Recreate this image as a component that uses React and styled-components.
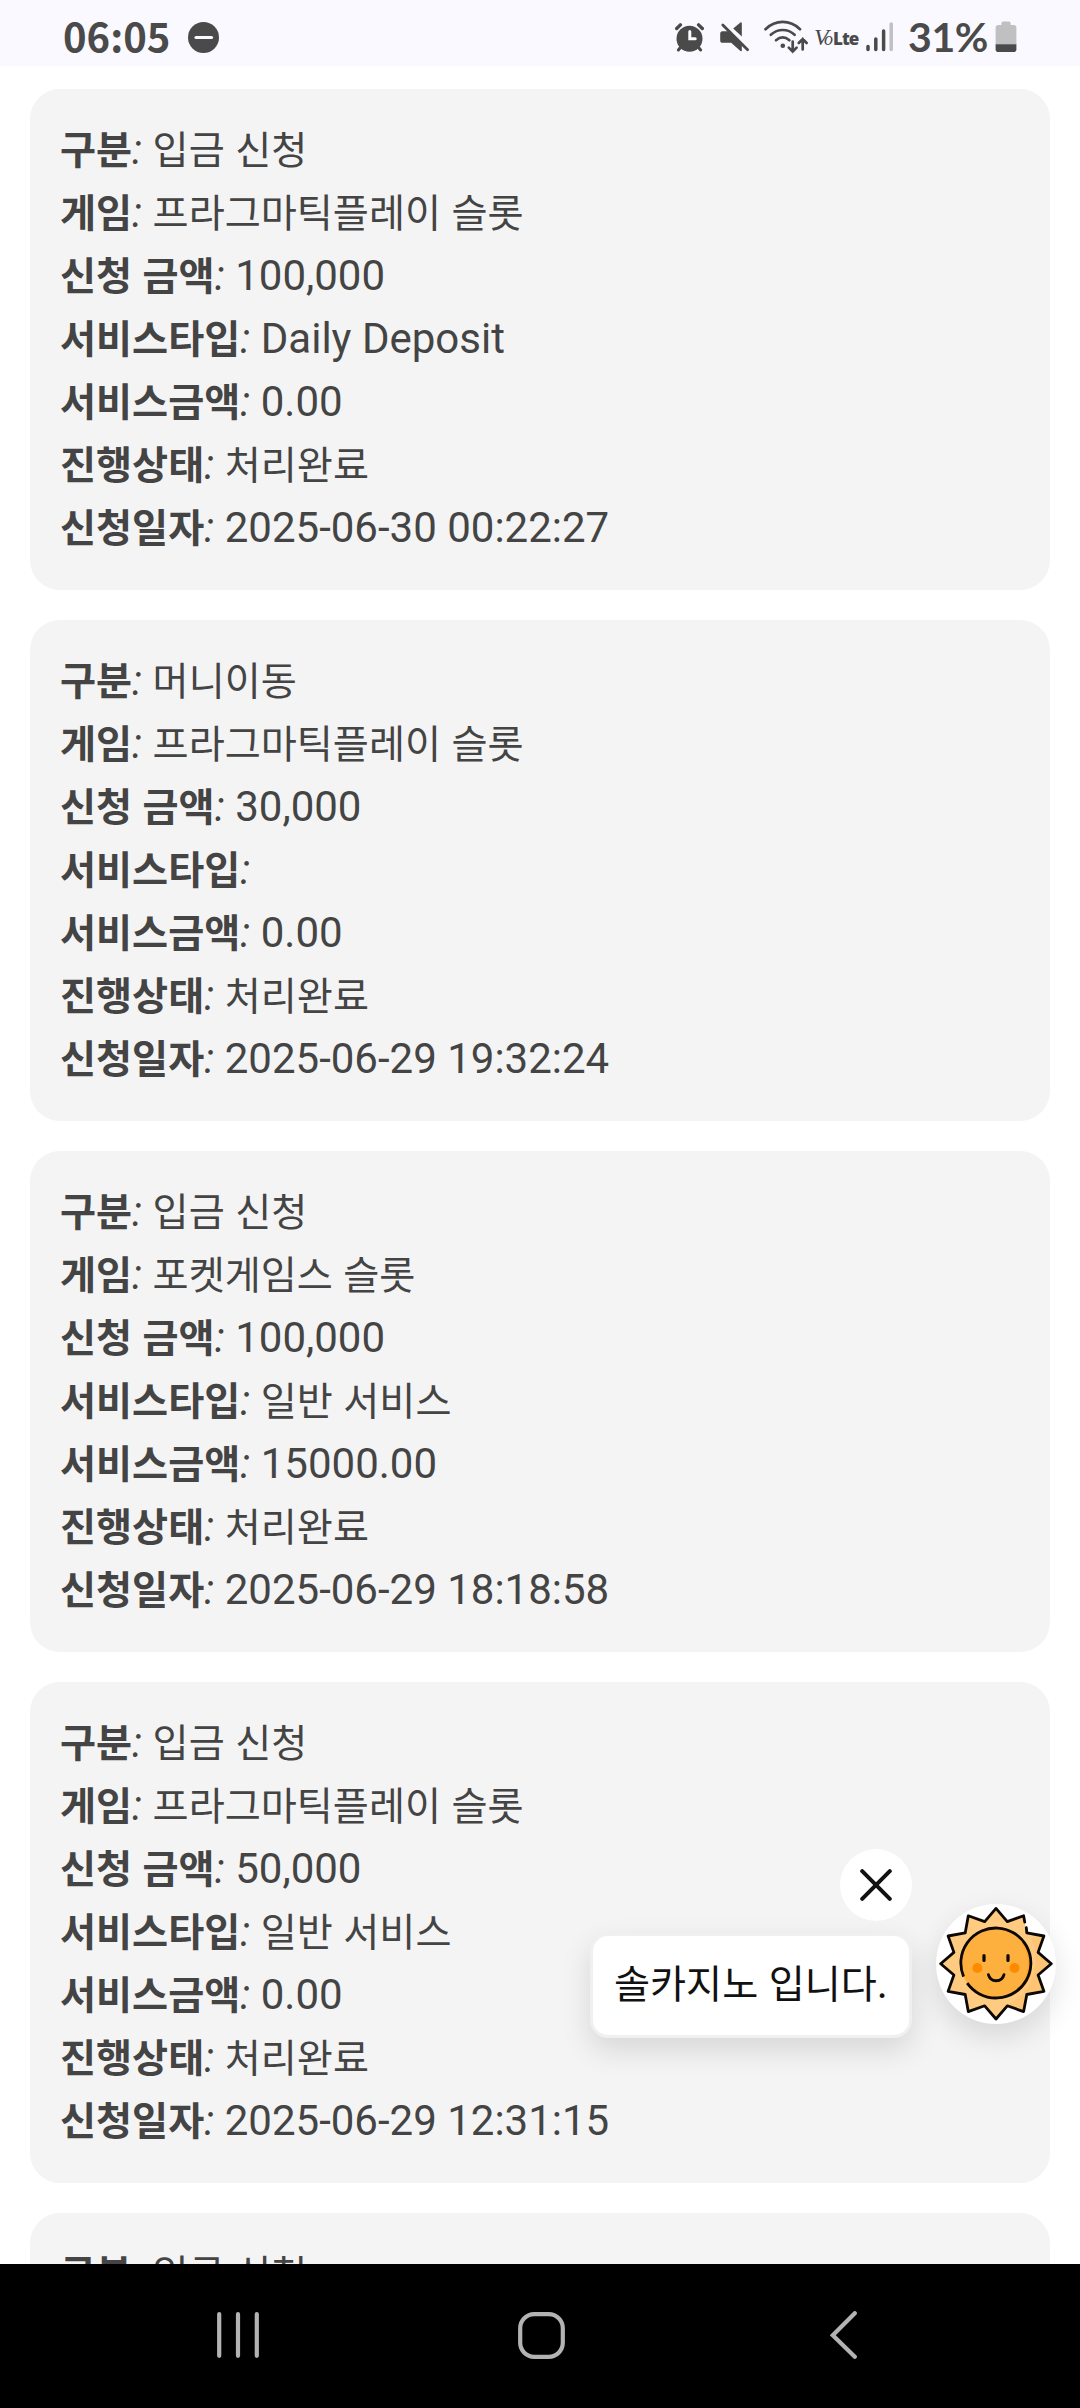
import React, { useState } from "react";
import styled, { createGlobalStyle } from "styled-components";

const requests = [
  {
    id: 1,
    type: "입금 신청",
    game: "프라그마틱플레이 슬롯",
    amount: "100,000",
    serviceType: "Daily Deposit",
    serviceAmount: "0.00",
    status: "처리완료",
    date: "2025-06-30 00:22:27",
  },
  {
    id: 2,
    type: "머니이동",
    game: "프라그마틱플레이 슬롯",
    amount: "30,000",
    serviceType: "",
    serviceAmount: "0.00",
    status: "처리완료",
    date: "2025-06-29 19:32:24",
  },
  {
    id: 3,
    type: "입금 신청",
    game: "포켓게임스 슬롯",
    amount: "100,000",
    serviceType: "일반 서비스",
    serviceAmount: "15000.00",
    status: "처리완료",
    date: "2025-06-29 18:18:58",
  },
  {
    id: 4,
    type: "입금 신청",
    game: "프라그마틱플레이 슬롯",
    amount: "50,000",
    serviceType: "일반 서비스",
    serviceAmount: "0.00",
    status: "처리완료",
    date: "2025-06-29 12:31:15",
  },
  // 하단바에 가려지는 카드
  { id: 5, type: "입금 신청" },
];

const fields = [
  ["type", "구분"],
  ["game", "게임"],
  ["amount", "신청 금액"],
  ["serviceType", "서비스타입"],
  ["serviceAmount", "서비스금액"],
  ["status", "진행상태"],
  ["date", "신청일자"],
];

//한글은 영문/숫자보다 살짝 작은 크기로 표시
const Mixed = ({ text }) =>
  text
    .split(/([가-힣]+)/)
    .filter(Boolean)
    .map((part, index) =>
      /[가-힣]/.test(part) ? <Hangul key={index}>{part}</Hangul> : part
    );

const RequestCard = ({ item }) => (
  <Card>
    {fields
      .filter(([name]) => item[name] !== undefined)
      .map(([name, label]) => (
        <Row key={name}>
          <Label>
            <Mixed text={label} />
          </Label>
          <Colon>:</Colon> <Mixed text={item[name]} />
        </Row>
      ))}
  </Card>
);

const StatusBar = () => (
  <StatusBox>
    <StatusGroup>
      <Clock>06:05</Clock>
      <Icon width="31" height="31" viewBox="0 0 31 31" $left={18}>
        <circle cx="15.5" cy="15.5" r="15.5" fill="#4a4a4a" />
        <path d="M8 15.5h15.5" stroke="#faf9ff" strokeWidth="3.2" strokeLinecap="round" />
      </Icon>
    </StatusGroup>
    <StatusGroup>
      {/* 알람 */}
      <Icon width="29" height="29" viewBox="0 0 29 29">
        <circle cx="14.5" cy="15.7" r="13" fill="#4a4a4a" />
        <path
          d="M1.7 5.5 5.4 1.9M27.3 5.5 23.6 1.9"
          stroke="#4a4a4a"
          strokeWidth="3.4"
          strokeLinecap="round"
        />
        <path
          d="M5.8 24 3.4 27M23.2 24 25.6 27"
          stroke="#4a4a4a"
          strokeWidth="3"
          strokeLinecap="round"
        />
        <path d="M14.8 8.6v7.1h5.4" fill="none" stroke="#fff" strokeWidth="3" strokeLinecap="round" />
      </Icon>
      {/* 무음 */}
      <Icon width="30" height="30" viewBox="0 0 30 30" $left={16}>
        <path
          d="M2.4 9.2H8L21.8 22.8V29.2L20.4 29 11.2 20.8H2.6C1 20.8.2 19.8.2 18.4V11.8C.2 10.2 1 9.2 2.4 9.2Z"
          fill="#4a4a4a"
        />
        <path d="M20.4.6 21.8.6V14.4L13.2 6.4Z" fill="#4a4a4a" />
        <path d="M2.8 3 27.6 27.8" stroke="#4a4a4a" strokeWidth="2.8" strokeLinecap="round" />
      </Icon>
      {/* 와이파이 */}
      <Icon width="44" height="34" viewBox="0 0 44 34" $left={14}>
        <g fill="none" stroke="#4a4a4a" strokeWidth="2.7" strokeLinecap="round">
          <path d="M1.5 9.2C11.5-.5 26-.5 36 9.2" />
          <path d="M6.8 14.8C13.8 8.4 23.8 8.4 30.6 14.8" />
          <path d="M12 20.2C16.2 16.7 21.2 16.7 25.4 20.2" />
          <path d="M28.7 21.5V31.4M24.8 27.6 28.7 31.6 32.6 27.6" />
          <path d="M38.7 29.5V19.2M34.8 23 38.7 19 42.6 23" />
        </g>
        <circle cx="18.8" cy="25.8" r="2.3" fill="#4a4a4a" />
      </Icon>
      {/* VoLTE */}
      <Volte>
        <VolteV>V</VolteV>
        <VolteO>o</VolteO>
        <VolteLte>Lte</VolteLte>
      </Volte>
      {/* 신호 */}
      <Icon width="28" height="30" viewBox="0 0 28 30" $left={10}>
        <g stroke="#4a4a4a" strokeWidth="3.5" strokeLinecap="round">
          <path d="M2 24.6V27.4M9.8 17V27.4M17.6 9V27.4" />
          <path d="M25.2 2V27.4" stroke="#c0c0c2" />
        </g>
      </Icon>
      <Percent>31%</Percent>
      <Icon width="22" height="32" viewBox="0 0 22 32" $left={8}>
        <path
          d="M8 0.5H14Q15.6.5 15.6 2.2V4H18.6Q21.4 4 21.4 6.8V23.5H.6V6.8Q.6 4 3.4 4H6.4V2.2Q6.4.5 8 .5Z"
          fill="#c0c0c2"
        />
        <path d="M.6 23.3H21.4V28.2Q21.4 31 18.6 31H3.4Q.6 31 .6 28.2Z" fill="#4a4a4a" />
      </Icon>
    </StatusGroup>
  </StatusBox>
);

const rays = Array.from({ length: 24 }, (_, i) => {
  const radius = i % 2 === 0 ? 55.3 : 43.6;
  const angle = (i * 15 * Math.PI) / 180;
  return `${(60 + radius * Math.sin(angle)).toFixed(1)},${(
    59.7 -
    radius * Math.cos(angle)
  ).toFixed(1)}`;
});
// 오른쪽 위 꼭짓점 아래에서 외곽선이 끊긴다
const rayLine = ["90.3,23.6", ...rays.slice(3), ...rays.slice(0, 3), "88.8,18.2"].join(" ");

const Sun = () => (
  <SunSvg viewBox="0 0 120 120">
    <polygon points={rays.join(" ")} fill="#fecb80" />
    <path
      d="M95 34C104 52 100 76 84 93L71 101 62 112 73.5 101 86 106 91 90 107 86 102 71 114 60 101 48 106 33Z"
      fill="#fdc06c"
      opacity="0.6"
    />
    <circle cx="60" cy="59.7" r="35" fill="#feb03f" />
    <path d="M84 37C96 52 94 76 78 89C101 81 101 47 84 37Z" fill="#fea52f" />
    <circle cx="41.4" cy="64" r="5" fill="#fe8a00" />
    <circle cx="78.5" cy="64" r="5" fill="#fe8a00" />
    <g fill="none" stroke="#0b0806" strokeWidth="2.8" strokeLinecap="round" strokeLinejoin="round">
      <polyline points={rayLine} />
      <path d="M31.2 79.1A35 35 0 1 0 27.6 72.6" strokeLinecap="butt" />
      <path d="M48 51.6V56.4M72 51.6V56.4" strokeWidth="3.2" />
      <path d="M52.4 70.6C54.4 78.8 66 78.8 68 70.6" />
    </g>
  </SunSvg>
);

const ChatWidget = () => {
  const [open, setOpen] = useState(true);

  return (
    <Widget>
      {open && (
        <BubbleColumn>
          <CloseBtn aria-label="닫기" onClick={() => setOpen(false)}>
            <svg width="32" height="32" viewBox="0 0 32 32">
              <path d="M2.2 2.2 29.8 29.8M29.8 2.2 2.2 29.8" stroke="#111" strokeWidth="4" strokeLinecap="round" />
            </svg>
          </CloseBtn>
          <Bubble>
            <Mixed text="솔카지노 입니다." />
          </Bubble>
        </BubbleColumn>
      )}
      <SunBtn onClick={() => setOpen(!open)}>
        <Sun />
      </SunBtn>
    </Widget>
  );
};

const NavBar = () => (
  <NavBox>
    <NavBtn>
      <svg width="42" height="46" viewBox="0 0 42 46">
        <path
          d="M2.2 2.2V43.8M21 2.2V43.8M39.8 2.2V43.8"
          stroke="#b3b3b3"
          strokeWidth="4.2"
          strokeLinecap="round"
        />
      </svg>
    </NavBtn>
    <NavBtn>
      <svg width="47" height="47" viewBox="0 0 47 47">
        <rect x="2.2" y="2.2" width="42.6" height="42.6" rx="14" fill="none" stroke="#b3b3b3" strokeWidth="4.2" />
      </svg>
    </NavBtn>
    <NavBtn>
      <svg width="27" height="48" viewBox="0 0 27 48">
        <path
          d="M24.8 2.2 2.8 24.2 24.8 45.8"
          fill="none"
          stroke="#b3b3b3"
          strokeWidth="4.2"
          strokeLinecap="round"
        />
      </svg>
    </NavBtn>
  </NavBox>
);

const App = () => {
  return (
    <>
      <GlobalStyle />
      <Screen>
        <StatusBar />
        <List>
          {requests.map((item) => (
            <RequestCard key={item.id} item={item} />
          ))}
        </List>
        <NavBar />
        <ChatWidget />
      </Screen>
    </>
  );
};

export default App;

const GlobalStyle = createGlobalStyle`
  * {
    box-sizing: border-box;
  }
  body {
    margin: 0;
    background-color: #fff;
    font-family: Roboto, "Noto Sans CJK KR", sans-serif;
  }
  button {
    padding: 0;
    border: none;
    background: none;
    font: inherit;
    cursor: pointer;
  }
  svg {
    display: block;
  }
`;

const Screen = styled.div`
  position: relative;
  width: 1080px;
  height: 2408px;
  display: flex;
  flex-direction: column;
  overflow: hidden;
`;

const StatusBox = styled.header`
  flex: none;
  height: 66px;
  padding: 8px 63px 0 63px;
  display: flex;
  justify-content: space-between;
  background-color: #faf9ff;
  color: #4a4a4a;
`;
const StatusGroup = styled.div`
  height: 58px;
  display: flex;
  align-items: center;
`;
const Icon = styled.svg`
  flex: none;
  margin-left: ${(props) => props.$left || 0}px;
`;
const Clock = styled.span`
  margin-bottom: 3px;
  font-family: "Noto Sans CJK KR", sans-serif;
  font-size: 40px;
  font-weight: 700;
  line-height: 55px;
`;
const Percent = styled.span`
  width: 79px;
  margin-left: 14px;
  font-family: Lato, sans-serif;
  font-size: 41px;
  font-weight: 700;
  line-height: 58px;
  letter-spacing: -0.4px;
  white-space: nowrap;
`;
const Volte = styled.span`
  width: 42px;
  margin-left: 6px;
  display: flex;
  align-items: baseline;
  line-height: 58px;
`;
const VolteV = styled.span`
  width: 10px;
  font: italic 24px "Liberation Serif", serif;
`;
const VolteO = styled.span`
  width: 9px;
  font: italic 18px "Liberation Serif", serif;
`;
const VolteLte = styled.span`
  font: 800 17px "Open Sans", sans-serif;
  letter-spacing: -1px;
`;

const List = styled.main`
  flex: 1;
  min-height: 0;
  padding: 23px 30px 0;
  display: flex;
  flex-direction: column;
  gap: 30px;
  overflow: hidden;
`;
const Card = styled.section`
  flex: none;
  padding: 30px;
  border-radius: 30px;
  background-color: #f4f4f4;
  color: #444;
`;
const Row = styled.p`
  height: 63px;
  margin: 0;
  font-size: 42px;
  line-height: 61px;
  white-space: nowrap;
`;
const Label = styled.strong`
  font-weight: 700;
`;
const Colon = styled.em`
  font-style: italic;
`;
const Hangul = styled.span`
  font-family: "Noto Sans CJK KR", sans-serif;
  font-size: 39.2px;
  line-height: 1;
`;

const Widget = styled.aside`
  position: absolute;
  right: 24px;
  bottom: 370px;
  display: flex;
  align-items: flex-end;
  gap: 24px;
`;
const BubbleColumn = styled.div`
  display: flex;
  flex-direction: column;
  align-items: flex-end;
  gap: 12px;
`;
const CloseBtn = styled.button`
  width: 72px;
  height: 72px;
  display: flex;
  align-items: center;
  justify-content: center;
  border-radius: 50%;
  background-color: #fff;
`;
const Bubble = styled.div`
  width: 322px;
  height: 105px;
  padding: 0 21px;
  border: 3px solid #f0f0f0;
  border-radius: 18px;
  background-color: #fff;
  box-shadow: 0 12px 30px rgba(0, 0, 0, 0.12);
  color: #111;
  font-size: 42px;
  line-height: 96px;
  white-space: nowrap;
`;
const SunBtn = styled.button`
  width: 120px;
  height: 120px;
  margin-bottom: 14px;
  border-radius: 50%;
  background-color: #fff;
  box-shadow: 0 12px 30px rgba(0, 0, 0, 0.12);
`;
const SunSvg = styled.svg`
  width: 120px;
  height: 120px;
`;

const NavBox = styled.nav`
  flex: none;
  height: 144px;
  padding: 0 85px 2px 87px;
  display: flex;
  background-color: #000;
`;
const NavBtn = styled.button`
  flex: 1;
  display: flex;
  align-items: center;
  justify-content: center;
`;
